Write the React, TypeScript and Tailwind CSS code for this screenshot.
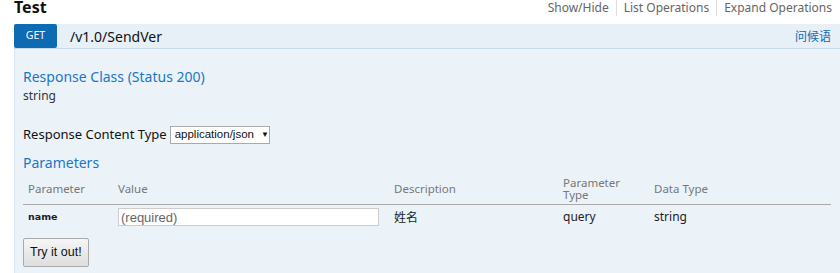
import React from "react";

const sans = "font-['Segoe_UI','Noto_Sans','Open_Sans',sans-serif]";
const arial = "font-['Liberation_Sans',Arial,sans-serif]";

function TopLinks() {
  const links = ["Show/Hide", "List Operations", "Expand Operations"];
  return (
    <ul className="flex items-center text-[12px] leading-[16px] text-[#666]">
      {links.map((label, i) => (
        <li
          key={label}
          className={`px-[7px] ${i > 0 ? "border-l border-[#ddd]" : ""} ${i === links.length - 1 ? "pr-[8px]" : ""}`}
        >
          {label}
        </li>
      ))}
    </ul>
  );
}

function ParamTable() {
  return (
    <table className="mt-[4px] w-[808px] border-collapse">
      <thead>
        <tr className="border-b border-[#aaa] text-left text-[11.5px] leading-[12px] text-[#777]">
          <th className="w-[95px] pb-[3px] pl-[5px] font-normal">Parameter</th>
          <th className="w-[276px] pb-[3px] font-normal">Value</th>
          <th className="w-[169px] pb-[3px] font-normal">Description</th>
          <th className="w-[91px] pb-[3px] font-normal">
            Parameter
            <br />
            Type
          </th>
          <th className="pb-[3px] font-normal">Data Type</th>
        </tr>
      </thead>
      <tbody>
        <tr className="h-[26px] text-[12px] leading-[16px] text-[#222]">
          <td className="pl-[5px] font-['DejaVu_Sans',sans-serif] text-[9.5px] font-bold">name</td>
          <td>
            <input
              className={`block h-[18px] w-[261px] border border-[#ccc] bg-white px-[2px] text-[13px] ${arial} placeholder:text-[#666]`}
              placeholder="(required)"
            />
          </td>
          <td className="font-['Noto_Sans_CJK_SC',sans-serif]">姓名</td>
          <td>query</td>
          <td>string</td>
        </tr>
      </tbody>
    </table>
  );
}

export default function App() {
  return (
    <div className={`h-[273px] w-[840px] overflow-hidden bg-white ${sans}`}>
      <div className="flex h-[24px] items-start justify-between pl-[14px]">
        <h2 className="-mt-[2px] text-[16px] font-bold leading-[18px] text-[#111]">Test</h2>
        <TopLinks />
      </div>

      <div className="ml-[14px] w-[840px]">
        <div className="flex h-[25px] items-center border-b border-[#c3d9ec] bg-[#e7f0f7]">
          <span className="flex h-[24px] w-[43px] items-center justify-center self-start rounded-[2px] bg-[#0f6ab4] text-[10.5px] text-white">
            GET
          </span>
          <span className="ml-[13px] text-[14px] text-[#111]">/v1.0/SendVer</span>
          <span className="ml-auto mr-[23px] font-['Noto_Sans_CJK_SC',sans-serif] text-[12px] text-[#0f6ab4]">
            问候语
          </span>
        </div>

        <div className="h-[250px] border-l border-[#dbe6ef] bg-[#ebf3f9] pl-[8px] pt-[18px]">
          <h4 className="text-[14px] leading-[20px] text-[#1a77c5]">Response Class (Status 200)</h4>
          <div className="mt-[1px] text-[12px] leading-[16px] text-[#333]">string</div>

          <div className="mt-[21px] flex items-center text-[13px] text-[#111]">
            <span>Response Content Type</span>
            <span
              className={`ml-[3px] flex h-[18px] w-[100px] items-center border border-[#aaa] bg-white pl-[4px] text-[11.5px] ${arial}`}
            >
              application/json
              <span className="ml-[7px] text-[8px]">▼</span>
            </span>
          </div>

          <h4 className="mt-[8px] text-[14px] leading-[20px] text-[#1a77c5]">Parameters</h4>
          <ParamTable />

          <button
            className={`mt-[8px] h-[29px] rounded-[2px] border border-[#aaa] bg-gradient-to-b from-[#f6f6f6] to-[#dedede] px-[6px] text-[12.5px] text-[#111] ${arial}`}
          >
            Try it out!
          </button>
        </div>
      </div>
    </div>
  );
}
